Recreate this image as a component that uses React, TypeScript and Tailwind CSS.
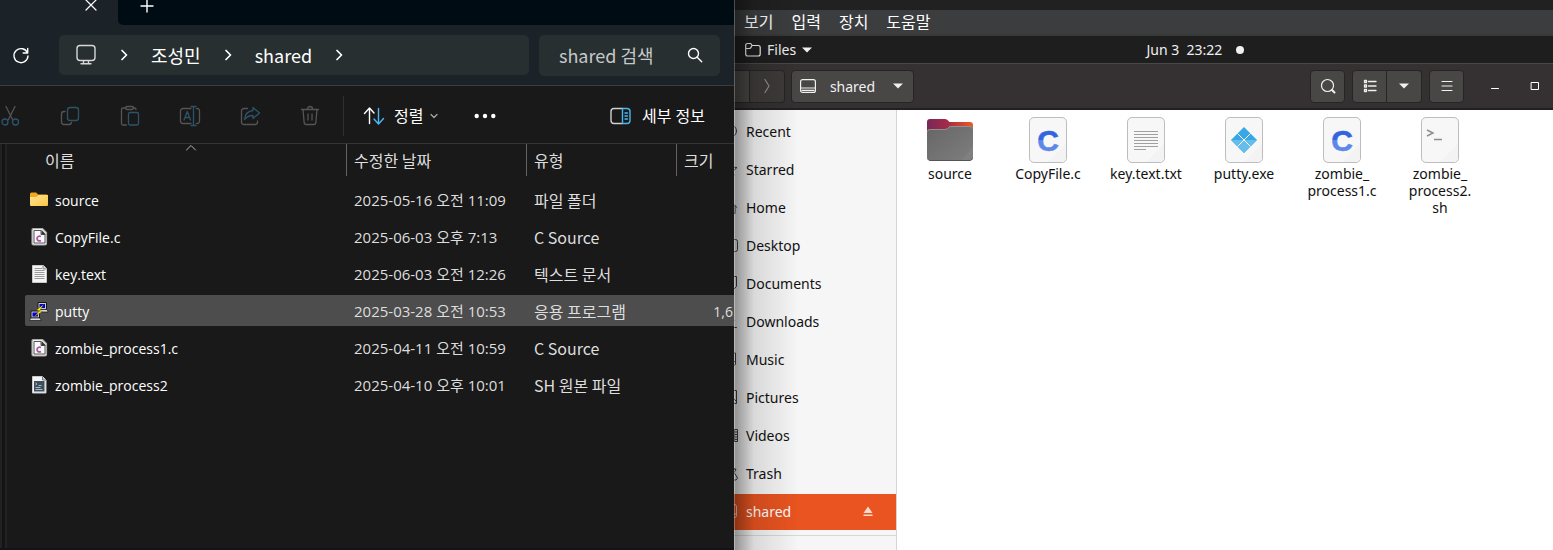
import type { ReactNode } from "react";

const WIN_FONT = "font-['Open_Sans','Noto_Sans_CJK_KR',sans-serif]";
const KR_FONT = "font-['Noto_Sans_CJK_KR',sans-serif]";
const GNOME_FONT = "font-['Noto_Sans','Noto_Sans_CJK_KR',sans-serif]";

function Line({ size = 24, width = 1, className = "", children }: { size?: number; width?: number; className?: string; children: ReactNode }) {
  return (
    <svg
      width={size}
      height={size}
      viewBox={`0 0 ${size} ${size}`}
      fill="none"
      stroke="currentColor"
      strokeWidth={width}
      strokeLinecap="round"
      strokeLinejoin="round"
      aria-hidden="true"
      className={`shrink-0 ${className}`}
    >
      {children}
    </svg>
  );
}

const Chevron = () => (
  <Line size={12} width={1.7} className="text-white">
    <path d="M4 1.5 8.5 6 4 10.5" />
  </Line>
);

const Caret = () => (
  <svg width="10" height="6" viewBox="0 0 10 6" fill="currentColor" aria-hidden="true" className="shrink-0">
    <path d="M0 .5h10L5 5.5z" />
  </svg>
);

/* ---------- Explorer toolbar ---------- */

const BLUE = "#2c5468";

const tools: { name: string; icon: ReactNode }[] = [
  {
    name: "잘라내기",
    icon: (
      <Line width={1.3}>
        <path d="M8 2.500 14.500 15.500M17 2.500 10.500 15.500" />
        <circle cx="7" cy="18" r="3" stroke={BLUE} />
        <circle cx="17.500" cy="18" r="3" stroke={BLUE} />
      </Line>
    ),
  },
  {
    name: "복사",
    icon: (
      <Line width={1.3}>
        <path d="M7 7.500H6A2.500 2.500 0 0 0 3.500 10v8A2.500 2.500 0 0 0 6 20.500h5a2.500 2.500 0 0 0 2.500-2" />
        <rect x="9.500" y="3.500" width="11" height="13" rx="2.500" stroke={BLUE} />
      </Line>
    ),
  },
  {
    name: "붙여넣기",
    icon: (
      <Line width={1.3}>
        <path d="M8 4H5a1.500 1.500 0 0 0-1.500 1.500v14A1.500 1.500 0 0 0 5 21h3.500M15 4h1.500q1.500 0 1.500 1.500" />
        <rect x="7.500" y="2.500" width="8" height="3" rx="1.500" />
        <rect x="10.500" y="8.500" width="10" height="12.500" rx="1.500" stroke={BLUE} />
      </Line>
    ),
  },
  {
    name: "이름 바꾸기",
    icon: (
      <Line width={1.3}>
        <path d="M13 4.500H5A2.500 2.500 0 0 0 2.500 7v10A2.500 2.500 0 0 0 5 19.500h8M18.500 4.500A2.500 2.500 0 0 1 21.500 7v10a2.500 2.500 0 0 1-3 2.500" />
        <path d="m6 16 3.300-8.500L12.500 16M7 13.500h4.500M15.500 3v18M13 2.500h5M13 21.500h5" stroke={BLUE} />
      </Line>
    ),
  },
  {
    name: "공유",
    icon: (
      <Line width={1.3}>
        <path d="M9.500 4.500H6A2.500 2.500 0 0 0 3.500 7v11A2.500 2.500 0 0 0 6 20.500h11a2.500 2.500 0 0 0 2.500-2.500v-1" />
        <path d="M15 3.500 21.500 9 15 14.500V11.500c-4 0-6 1-8.500 4C7 10.500 10 7 15 6.500z" stroke={BLUE} />
      </Line>
    ),
  },
  {
    name: "삭제",
    icon: (
      <Line width={1.3}>
        <path d="M3.500 5.500h17M9.500 5a2.500 2.500 0 0 1 5 0M5 5.500l1.200 13.500a2 2 0 0 0 2 1.500h7.600a2 2 0 0 0 2-1.500L19 5.500M10 10v6M14 10v6" />
      </Line>
    ),
  },
];

/* ---------- Explorer file icons ---------- */

const FolderSmall = () => (
  <svg width="20" height="20" viewBox="0 1 20 20" aria-hidden="true">
    <defs>
      <linearGradient id="folder-yellow" x1="0" y1="0" x2="1" y2="1">
        <stop offset="0" stopColor="#ffe39a" />
        <stop offset="1" stopColor="#fcc63f" />
      </linearGradient>
    </defs>
    <path d="M1 4q0-1.500 1.500-1.500h4.700L9 4.500h8.500q1.500 0 1.500 1.500v4H1z" fill="#f3a91c" />
    <path d="M1 7h6.500L9.500 5H19v10q0 1-1 1H2q-1 0-1-1z" fill="url(#folder-yellow)" />
  </svg>
);

const CSmall = () => (
  <svg width="20" height="20" viewBox="0 1 20 20" aria-hidden="true">
    <path d="M4.500 1.500h9l4 4v11q0 1.500-1.500 1.500H4.500Q3 18 3 16.500V3q0-1.500 1.500-1.500z" fill="#efefef" stroke="#a9a9a9" strokeWidth="1.200" />
    <path d="M5 3.500h7v4h4V16H5z" fill="#fbfbfb" stroke="#555" strokeWidth="1" />
    <path d="M12.500 3v4.500H17z" fill="#333" />
    <path d="M12 9.500c-2-.9-4 0-4 2s2 3 4 2" fill="none" stroke="#a957a0" strokeWidth="1.700" />
  </svg>
);

const TextSmall = () => (
  <svg width="20" height="20" viewBox="0 1 20 20" aria-hidden="true">
    <path d="M3.500 1.500h11l3 3v14h-14z" fill="#f5f5f5" stroke="#c9c9c9" />
    <path d="M14 1.500v3.500h3.500" fill="#ccc" stroke="#8d8d8d" />
    <path d="M5.500 4.500H13M5.500 6.500h10M5.500 8.500h10M5.500 10.500h10M5.500 12.500h10M5.500 14.500h10" stroke="#9a9a9a" />
  </svg>
);

const PuttySmall = () => (
  <svg width="20" height="20" viewBox="0 1 20 20" aria-hidden="true">
    <path d="M9 1.500h8.500v7H9z" fill="#c9c9c9" stroke="#161616" />
    <path d="M10.500 3h5.500v4h-5.500z" fill="#0000d8" />
    <path d="M8.500 8.500H18l1.200 2.500H8z" fill="#d9d9d9" stroke="#161616" strokeWidth=".7" />
    <path d="M2 10h8.500v7H2z" fill="#c9c9c9" stroke="#161616" />
    <path d="M3.500 11.500h5.500v4H3.500z" fill="#0000d8" />
    <path d="M1.500 17H11l1.200 2.500H.500z" fill="#d9d9d9" stroke="#161616" strokeWidth=".7" />
    <path d="m14.500 3.500-7 5.500 3.200.8L5.500 15.500l8-5-2.800-.8z" fill="#ffee00" stroke="#554d00" strokeWidth=".4" />
  </svg>
);

const ShellSmall = () => (
  <svg width="20" height="20" viewBox="0 1 20 20" aria-hidden="true">
    <path d="M3.500 1.500h10l3.500 3.500v13h-13.500z" fill="#f5f5f5" stroke="#c9c9c9" />
    <path d="M13.500 1.500v3.500H17" fill="#ccc" stroke="#777" />
    <path d="M5 6h10.500v10.500H5z" fill="#3d4f5c" />
    <path d="M6.500 8 8 9 6.500 10M9.500 10.500h3M6.500 12.500h5M6.500 14.500h7" fill="none" stroke="#aebac2" />
  </svg>
);

type Entry = { name: string; date: string; type: string; size?: string; icon: ReactNode; selected?: boolean };

const entries: Entry[] = [
  { name: "source", date: "2025-05-16 오전 11:09", type: "파일 폴더", icon: <FolderSmall /> },
  { name: "CopyFile.c", date: "2025-06-03 오후 7:13", type: "C Source", icon: <CSmall /> },
  { name: "key.text", date: "2025-06-03 오전 12:26", type: "텍스트 문서", icon: <TextSmall /> },
  { name: "putty", date: "2025-03-28 오전 10:53", type: "응용 프로그램", size: "1,6", icon: <PuttySmall />, selected: true },
  { name: "zombie_process1.c", date: "2025-04-11 오전 10:59", type: "C Source", icon: <CSmall /> },
  { name: "zombie_process2", date: "2025-04-10 오후 10:01", type: "SH 원본 파일", icon: <ShellSmall /> },
];

function HeaderCell({ children }: { children: ReactNode }) {
  return (
    <th className="p-0 pb-[5px] text-left font-normal">
      <div className="flex h-8 items-center border-l border-[#636363] pl-[7px]">{children}</div>
    </th>
  );
}

function Explorer() {
  return (
    <section className={`flex min-w-0 flex-col overflow-hidden border-b-2 border-[#17111a] bg-[#191919] text-white ${WIN_FONT}`}>
      <div className="flex h-[25px] items-start bg-[#1b2228]">
        <div className="flex w-[118px] justify-end pr-[20px]">
          <button aria-label="탭 닫기" className="-mt-px block">
            <Line size={14} width={1.2}>
              <path d="m2 1 10 10M12 1 2 11" />
            </Line>
          </button>
        </div>
        <div className="h-full flex-1 rounded-bl-[5px] bg-[#000c14] pl-[22px]">
          <button aria-label="새 탭" className="-mt-px block">
            <Line size={14} width={1.4}>
              <path d="M7 1v12M1 7h12" />
            </Line>
          </button>
        </div>
      </div>

      <div className="flex h-[61px] items-center gap-[10px] border-b border-[#3c3c3c] bg-[#1b2228] pr-[14px]">
        <button aria-label="새로 고침" className="flex w-[49px] justify-start pl-[12px]">
          <Line size={20} width={1.4}>
            <path d="M15.500 8A7 7 0 1 0 16 11M15.700 3.500V8h-4.500" />
          </Line>
        </button>
        <nav aria-label="주소" className={`flex h-10 flex-1 items-center rounded-[5px] bg-[#272f31] pl-4 text-[18px] ${KR_FONT}`}>
          <Line size={22} width={1.4} className="text-[#d8d8d8]">
            <rect x="2" y="1.500" width="18" height="15" rx="3" />
            <path d="M8.500 17v2.500M13.500 17v2.500M6 19.700h10" />
          </Line>
          <div className="ml-[21px] flex items-center gap-[21px]">
            <Chevron />
            <a href="#user">조성민</a>
            <Chevron />
            <a href="#shared">shared</a>
            <Chevron />
          </div>
        </nav>
        <label className="flex h-[41px] w-[181px] items-center rounded-[5px] bg-[#272f31] pr-[16px] pl-[20px]">
          <input
            type="search"
            aria-label="검색"
            placeholder="shared 검색"
            className={`w-full min-w-0 bg-transparent text-[18px] text-white outline-none placeholder:text-[#c6c8c9] ${KR_FONT}`}
          />
          <Line size={18} width={1.4}>
            <circle cx="7.500" cy="7.500" r="5" />
            <path d="m11.200 11.200 4.500 4.500" />
          </Line>
        </label>
      </div>

      <div className="flex h-[58px] items-center border-b border-[#353535] pt-[2px] pr-[29px] text-[16px]">
        <div className="-ml-[2px] flex items-center gap-9 text-[#555]">
          {tools.map((t) => (
            <button key={t.name} aria-label={t.name}>
              {t.icon}
            </button>
          ))}
        </div>
        <div className="ml-[21px] h-10 w-px bg-[#303030]" />
        <button className="ml-[19px] flex items-center gap-[9px]">
          <Line size={22} width={1.4}>
            <path d="M6.500 18.500v-15M1.500 8.500l5-5.500 4.500 5" />
            <path d="M15.500 3.500v15M11 14l4.500 5 5-5.500" stroke="#4cb8f0" />
          </Line>
          <span className="flex items-center gap-[6px]">
            정렬
            <Line size={10} width={1.2} className="text-[#aaa]">
              <path d="m2 3.500 3 3 3-3" />
            </Line>
          </span>
        </button>
        <button aria-label="자세히 보기" className="ml-[35px]">
          <svg width="22" height="6" viewBox="0 0 22 6" fill="currentColor" aria-hidden="true">
            <circle cx="2.700" cy="3" r="2.200" />
            <circle cx="11" cy="3" r="2.200" />
            <circle cx="19.300" cy="3" r="2.200" />
          </svg>
        </button>
        <button className="ml-auto flex items-center gap-[10px]">
          <Line size={22} width={1.4} className="text-[#d0d0d0]">
            <path d="M12.500 3.500H4A3 3 0 0 0 1 6.500v9a3 3 0 0 0 3 3h8.500" />
            <path d="M12.500 3.500H17a3 3 0 0 1 3 3v9a3 3 0 0 1-3 3h-4.500zM15 8h2.500M15 11h2.500M15 14h2.500" stroke="#4cb8f0" />
          </Line>
          세부 정보
        </button>
      </div>

      <div className="flex flex-1">
        <div className="mr-[18px] w-[7px] shrink-0 border-x-2 border-[#222] bg-[#141414]" />
        <table className="h-fit w-full table-fixed border-collapse text-[15px] whitespace-nowrap">
          <colgroup>
            <col />
            <col className="w-[180px]" />
            <col className="w-[150px]" />
            <col className="w-[58px]" />
          </colgroup>
          <thead className={`text-[16px] text-[#dedede] ${KR_FONT}`}>
            <tr>
              <th className="p-0 pb-[5px] text-left font-normal">
                <div className="relative flex h-8 items-center pl-5">
                  이름
                  <Line size={12} className="absolute top-[-2px] left-[160px] text-[#b5b5b5]">
                    <path d="m1.500 8 4.500-4.500L10.500 8" />
                  </Line>
                </div>
              </th>
              <HeaderCell>수정한 날짜</HeaderCell>
              <HeaderCell>유형</HeaderCell>
              <HeaderCell>크기</HeaderCell>
            </tr>
          </thead>
          <tbody>
            {entries.map((e) => {
              const bg = e.selected ? "bg-[#4d4d4d]" : "";
              return (
                <tr key={e.name} className="text-[#dedede]">
                  <td className="px-0 py-[3px]">
                    <div className={`flex h-[31px] items-center gap-[6px] rounded-l-[2px] pt-[2px] pl-[4px] text-[14px] text-white ${bg}`}>
                      {e.icon}
                      {e.name}
                    </div>
                  </td>
                  <td className="px-0 py-[3px]">
                    <div className={`flex h-[31px] items-center pt-[2px] pl-[8px] ${bg}`}>{e.date}</div>
                  </td>
                  <td className="px-0 py-[3px]">
                    <div className={`flex h-[31px] items-center pl-[8px] text-[16px] ${KR_FONT} ${bg}`}>{e.type}</div>
                  </td>
                  <td className="px-0 py-[3px]">
                    <div className={`flex h-[31px] items-center justify-end overflow-hidden pt-[2px] pr-px text-[14px] ${bg}`}>{e.size}</div>
                  </td>
                </tr>
              );
            })}
          </tbody>
        </table>
      </div>
    </section>
  );
}

/* ---------- GNOME side ---------- */

const drive = (
  <>
    <rect x="1.500" y="1.500" width="13" height="13" rx="2" />
    <path d="M1.500 11h13" />
  </>
);

const places: { name: string; icon: ReactNode; selected?: boolean }[] = [
  { name: "Recent", icon: <><circle cx="8" cy="8" r="6.500" /><path d="M8 4v4h3" /></> },
  { name: "Starred", icon: <path d="m8 1.500 2 4.500 5 .5-4 3.500 1 4.500-4-2.500-4 2.500 1-4.500L1 6.500 6 6z" /> },
  { name: "Home", icon: <path d="M1 8.500 8 2l7 6.500M3 7v7.500h3.500V10h3v4.500H13V7" /> },
  { name: "Desktop", icon: <rect x="1.500" y="2.500" width="14" height="12" rx="2" /> },
  { name: "Documents", icon: <path d="M2.500 1.500h12v10l-3 3h-9z" /> },
  { name: "Downloads", icon: <path d="M8 2v9M4 7.500l4 4 4-4M2.500 14.500h12" /> },
  { name: "Music", icon: <path d="M5 12V2h8.500v10M5 12a2 2 0 1 1-2-1.500h2M13.500 12a2 2 0 1 1-2-1.500h2" /> },
  { name: "Pictures", icon: <><rect x="1.500" y="1.500" width="13" height="13" /><path d="m2 12 4-4 3 3 2-2 3 3" /></> },
  { name: "Videos", icon: <><rect x="1.500" y="2.500" width="14" height="12" /><path d="M4.500 2.500v12M12.500 2.500v12M12.500 5h3M12.500 7.500h3M12.500 10h3M12.500 12.500h3" /></> },
  { name: "Trash", icon: <path d="M3 4.500h10M11 2.500l3 2-2 3 3 4.500a2 2 0 0 1-2 3H5a2 2 0 0 1-2-3l3-5" /> },
  { name: "shared", icon: drive, selected: true },
];

function Sheet({ children }: { children?: ReactNode }) {
  return (
    <svg width="40" height="48" viewBox="0 0 40 48" aria-hidden="true">
      <rect x="1.500" y="1.500" width="37" height="45" rx="4.500" fill="#f7f7f7" stroke="#bdbdbd" />
      <path d="M38 28v14a4.500 4.500 0 0 1-4.500 4H20z" fill="#f3f3f3" />
      {children}
    </svg>
  );
}

const BigFolder = () => (
  <svg width="48" height="48" viewBox="0 0 48 48" aria-hidden="true">
    <defs>
      <linearGradient id="folder-back" x1="0" y1="0" x2="1" y2="0">
        <stop offset="0" stopColor="#77285a" />
        <stop offset=".45" stopColor="#a52a45" />
        <stop offset="1" stopColor="#ee5a24" />
      </linearGradient>
      <linearGradient id="folder-front" x1="0" y1="0" x2="1" y2="1">
        <stop offset="0" stopColor="#666" />
        <stop offset="1" stopColor="#7e7e7e" />
      </linearGradient>
    </defs>
    <path d="M1 6q0-3 3-3h15q2 0 3 1.500L23.500 6H44q3 0 3 3v12H1z" fill="url(#folder-back)" />
    <path d="M1 16q0-3 3-3h15q1.500 0 2.500-1L23 10.500q.8-.5 2-.5h19q3 0 3 3v28q0 3-3 3H4q-3 0-3-3z" fill="url(#folder-front)" />
    <path d="M1.500 15.500q.3-2 2.500-2h15q1.800 0 3-1.200l1-1q.8-.8 2-.8h19q2 0 2.500 2" fill="none" stroke="#9a9a9a" strokeWidth=".8" />
    <path d="M47 31v10q0 3-3 3h-8z" fill="#808080" />
    <path d="M1.500 42.500Q2.300 44.500 4 44.500h40q1.700 0 2.500-2" fill="none" stroke="#555" />
  </svg>
);

const CBig = () => (
  <Sheet>
    <defs>
      <linearGradient id="c-blue" x1="0" y1="0" x2="0" y2="1">
        <stop offset=".5" stopColor="#3465e0" />
        <stop offset=".5" stopColor="#5e87ea" />
      </linearGradient>
    </defs>
    <text x="20" y="34.500" textAnchor="middle" fontFamily="Liberation Sans, sans-serif" fontWeight="700" fontSize="30" fill="url(#c-blue)" stroke="url(#c-blue)" strokeWidth=".6">
      C
    </text>
  </Sheet>
);

const files: { lines: string[]; icon: ReactNode }[] = [
  { lines: ["source"], icon: <BigFolder /> },
  { lines: ["CopyFile.c"], icon: <CBig /> },
  {
    lines: ["key.text.txt"],
    icon: (
      <Sheet>
        <path d="M8 15.500h24M8 18.500h24M8 21.500h24M8 24.500h24M8 27.500h24M8 30.500h24M8 33.500h12" stroke="#a0a0a0" />
      </Sheet>
    ),
  },
  {
    lines: ["putty.exe"],
    icon: (
      <Sheet>
        <path d="m20 11 13 13-13 13L7 24z" fill="#38a8e4" />
        <path d="M7 24h26L20 37z" fill="#66bdec" />
        <path d="m13.500 17.500 13 13M26.500 17.500l-13 13" stroke="#f7f7f7" strokeWidth="1" />
      </Sheet>
    ),
  },
  { lines: ["zombie_", "process1.c"], icon: <CBig /> },
  {
    lines: ["zombie_", "process2.", "sh"],
    icon: (
      <Sheet>
        <path d="m7 14 6 3-6 3M14 23.500h8" fill="none" stroke="#8d8d8d" strokeWidth="1.400" />
      </Sheet>
    ),
  },
];

const buttonFrame = "flex h-[33px] items-center justify-center border border-[#272424]";
const toolButton = `${buttonFrame} bg-[#494745] text-[#f0f0f0]`;

function Gnome() {
  return (
    <section className={`relative flex min-w-0 flex-col overflow-hidden bg-white text-[14px] ${GNOME_FONT}`}>
      <div className="h-[10px] bg-[#212121]" />
      <nav aria-label="메뉴" className="flex h-[26px] items-center gap-[18px] border-b-2 border-[#383a37] bg-[#3b3d3e] pl-[10px] text-[16px] leading-none text-white">
        <button>보기</button>
        <button>입력</button>
        <button>장치</button>
        <button>도움말</button>
      </nav>

      <div className="flex h-7 items-center border-b border-[#484848] bg-[#1e1e1e] text-[#f0f0f0]">
        <div className="w-1/2 pl-[11px]">
          <button className="flex items-center gap-[6px]">
            <Line size={16} width={1.2}>
              <path d="M.7 3.500q0-2 2-2h3l1.500 2h6q2 0 2 2v6.500q0 2-2 2H2.700q-2 0-2-2zM.7 6.500h3.500q1.500 0 2-1.500l.8-1.500" />
            </Line>
            Files
            <Caret />
          </button>
        </div>
        <button className="flex items-center gap-[14px] pl-[3px]">
          <span className="whitespace-pre">Jun 3  23:22</span>
          <span className="size-2 rounded-full bg-[#f0f0f0]" />
        </button>
      </div>

      <header className="flex h-[46px] items-center border-b-2 border-[#232021] bg-[#353132] pr-[12px]">
        <button aria-label="뒤로" className={`${toolButton} w-4 border-l-0`} />
        <button aria-label="앞으로" className={`${buttonFrame} w-[35px] rounded-r-[4px] border-l-0 bg-[#3d3a39] text-[#8f8f8f]`}>
          <Line size={16} width={1.2}>
            <path d="m6 1.500 4 6.500-4 6.500" />
          </Line>
        </button>
        <button className={`${toolButton} ml-[6px] w-[123px] rounded-[4px] pr-[2px]`}>
          <Line size={16} width={1.2}>
            <rect x=".6" y="1.600" width="14.800" height="12.800" rx="2" />
            <path d="M1 10h14M2 12.300h12" />
          </Line>
          <span className="mr-[18px] ml-[14px]">shared</span>
          <Caret />
        </button>
        <div className="ml-auto flex items-center gap-[7px]">
          <button aria-label="Search" className={`${toolButton} w-[35px] rounded-[4px]`}>
            <Line size={16} width={1.2}>
              <circle cx="7.500" cy="7.500" r="6" />
              <path d="m12 12 2.500 2.500" strokeWidth="2" />
            </Line>
          </button>
          <div className="flex">
            <button aria-label="List view" className={`${toolButton} w-[35px] rounded-l-[4px]`}>
              <Line size={14} width={1.3}>
                <path d="M5.500 2.500H13M5.500 7H13M5.500 11.500H13" />
                <path d="M1.500 1.500h2v2h-2zM1.500 6h2v2h-2zM1.500 10.500h2v2h-2z" />
              </Line>
            </button>
            <button aria-label="View options" className={`${toolButton} w-[35px] rounded-r-[4px] border-l-0`}>
              <Caret />
            </button>
          </div>
          <button aria-label="Menu" className={`${toolButton} w-[35px] rounded-[4px]`}>
            <Line size={12} width={1.2}>
              <path d="M1 1.500h10M1 6h10M1 10.500h10" />
            </Line>
          </button>
        </div>
        <div className="ml-[25px] flex items-center gap-[28px] text-white">
          <button aria-label="Minimize">
            <Line size={12}>
              <path d="M2.500 8.500h7" />
            </Line>
          </button>
          <button aria-label="Maximize">
            <Line size={12}>
              <path d="M2.500 2.500h7v7h-7z" />
            </Line>
          </button>
        </div>
      </header>

      <div className="flex flex-1">
        <aside className="w-[163px] shrink-0 overflow-hidden border-r border-[#d5d5d5] bg-[#f6f6f6]">
          <ul className="-ml-3 flex flex-col gap-[2px] border-b border-[#d8d8d8] pt-[4px] pb-[5px]">
            {places.map((p) => (
              <li key={p.name} className={p.selected ? "bg-[#e95420] text-white" : "text-[#111]"}>
                <a href={`#${p.name}`} className="flex h-9 items-center gap-2 pr-[22px] pb-[2px]">
                  <Line size={16} className={p.selected ? "text-[#f9d5c8]" : "text-[#444]"}>
                    {p.icon}
                  </Line>
                  {p.name}
                  {p.selected && (
                    <svg width="12" height="12" viewBox="0 0 12 12" fill="#fbd9cc" role="img" aria-label="Eject" className="ml-auto">
                      <path d="M6 1.500 10.500 8h-9zM1.500 9.500h9v1.500h-9z" />
                    </svg>
                  )}
                </a>
              </li>
            ))}
          </ul>
        </aside>
        <main className="flex flex-1 flex-wrap content-start items-start pt-[6px] pl-[4px]">
          {files.map((f) => (
            <button key={f.lines.join("")} className="flex w-[98px] flex-col items-center text-[14px] leading-[17px] text-[#111]">
              {f.icon}
              <span className="mt-px">
                {f.lines.map((l) => (
                  <span key={l} className="block">
                    {l}
                  </span>
                ))}
              </span>
            </button>
          ))}
        </main>
      </div>

      <div className="pointer-events-none absolute inset-y-0 left-0 w-16 border-l border-[#777]/50 bg-gradient-to-r from-black/40 via-black/12 via-30% to-transparent" />
    </section>
  );
}

export default function App() {
  return (
    <div className="grid min-h-screen grid-cols-[734fr_819fr]">
      <Explorer />
      <Gnome />
    </div>
  );
}
